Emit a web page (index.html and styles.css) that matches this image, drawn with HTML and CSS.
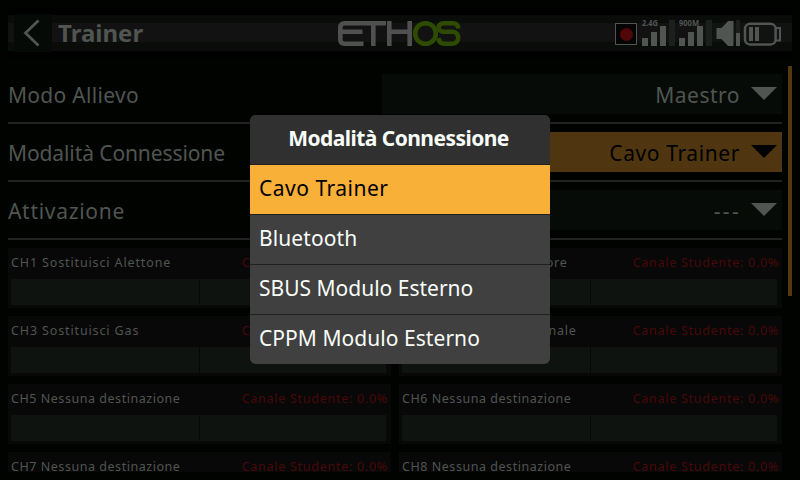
FILE: index.html
```html
<!DOCTYPE html>
<html lang="it">
<head>
<meta charset="utf-8">
<title>Trainer</title>
<link rel="stylesheet" href="styles.css">
</head>
<body>
<div class="screen">
  <header class="topbar">
    <div class="back"><svg width="38" height="38" viewBox="0 0 38 38"><path d="M25.500 6.500 12.500 19 25.500 31.500" fill="none" stroke="#505551" stroke-width="2.800"/></svg></div>
    <h1 class="title">Trainer</h1>
    <svg class="logo" width="124" height="28" viewBox="0 0 124 28" fill="none" stroke-width="4.600">
      <g stroke="#505050"><path d="M49 3.300H7.500Q3.300 3.300 3.300 7.500V19.500Q3.300 23.700 7.500 23.700H26.500M3.300 11.700H25.500M36.300 3.300V26M52.300 1V26M72.700 1V26M52.300 11.700H72.700"/></g>
      <g stroke="#2f4b00"><circle cx="88.500" cy="13.500" r="10.300"/><path d="M121.300 8.500Q121 3.300 115.500 3.300H106.500C100 3.300 100 11.700 106.500 11.700H115.500C123 11.700 123 23.700 115.500 23.700H107.500Q102 23.700 101.500 18"/></g>
    </svg>
    <svg class="status" width="170" height="38" viewBox="0 0 170 38">
      <rect x="3.500" y="9.500" width="21" height="21" fill="#050505" stroke="#505551"/>
      <circle cx="14.500" cy="20.500" r="6.500" fill="#500708"/>
      <g fill="#505551">
        <path d="M30 24h6v8h-6zM39 18h6v14h-6zM48 12h6v20h-6zM67 24h6v8h-6zM76 18h6v14h-6zM85 12h6v20h-6z"/>
        <path d="M104.500 14h5L116 7h5.500v25H116l-6.500-7h-5zM124 19h4v13h-4zM137 13h4v14h-4zM143 13h4v14h-4z"/>
      </g>
      <path d="M57 6h6v26h-6zM94 6h6v26h-6zM124 6h4v13h-4z" fill="#1c201d"/>
      <rect x="133" y="9.800" width="30.600" height="20.600" rx="5" fill="none" stroke="#505551" stroke-width="2.500"/>
      <path d="M164 14h4v12.500h-4" fill="none" stroke="#505551" stroke-width="2"/>
      <text class="band" x="30" y="12" textLength="16" lengthAdjust="spacingAndGlyphs">2.4G</text>
      <text class="band" x="67" y="12" textLength="20" lengthAdjust="spacingAndGlyphs">900M</text>
    </svg>
  </header>
  <main class="content">
    <section class="form">
      <div class="row"><span class="label modo">Modo Allievo</span><div class="select"><span class="maestro">Maestro</span><i class="arrow"></i></div></div>
      <div class="row"><span class="label conn">Modalità Connessione</span><div class="select focus"><span class="cavo">Cavo Trainer</span><i class="arrow"></i></div></div>
      <div class="row"><span class="label att">Attivazione</span><div class="select"><span class="dashes">---</span><i class="arrow"></i></div></div>
    </section>
    <section class="channels">
      <article class="card"><div class="info"><span>CH1 Sostituisci Alettone</span><b>Canale Studente: 0.0%</b></div><div class="bar"></div></article>
      <article class="card"><div class="info"><span>CH2 Sostituisci Elevatore</span><b>Canale Studente: 0.0%</b></div><div class="bar"></div></article>
      <article class="card"><div class="info"><span>CH3 Sostituisci Gas</span><b>Canale Studente: 0.0%</b></div><div class="bar"></div></article>
      <article class="card"><div class="info"><span class="rudder">CH4 Sostituisci Direzionale</span><b>Canale Studente: 0.0%</b></div><div class="bar"></div></article>
      <article class="card"><div class="info"><span class="none">CH5 Nessuna destinazione</span><b>Canale Studente: 0.0%</b></div><div class="bar"></div></article>
      <article class="card"><div class="info"><span class="none">CH6 Nessuna destinazione</span><b>Canale Studente: 0.0%</b></div><div class="bar"></div></article>
      <article class="card"><div class="info"><span class="none">CH7 Nessuna destinazione</span><b>Canale Studente: 0.0%</b></div><div class="bar"></div></article>
      <article class="card"><div class="info"><span class="none">CH8 Nessuna destinazione</span><b>Canale Studente: 0.0%</b></div><div class="bar"></div></article>
    </section>
  </main>
  <div class="scroll"></div>
  <div class="dialog" role="dialog">
    <h2>Modalità Connessione</h2>
    <ul>
      <li class="selected">Cavo Trainer</li>
      <li class="bluetooth">Bluetooth</li>
      <li class="sbus">SBUS Modulo Esterno</li>
      <li class="cppm">CPPM Modulo Esterno</li>
    </ul>
  </div>
</div>
</body>
</html>
```
FILE: styles.css
```css
* { box-sizing: border-box; }
body { margin: 0; background: #000300; font-family: "Noto Sans", sans-serif; }
.screen { position: relative; width: 800px; height: 480px; overflow: hidden; color: #505551; }
.topbar { display: flex; height: 50px; margin: 8px 8px 0; padding: 6px 6px 0; background: linear-gradient(#000 0 7px, #090c09 7px 15px, #111211 15px 34px, #090c09 34px 43px, #000100 43px); }
.back { width: 38px; height: 38px; background: #060a07; }
.back svg { display: block; margin-left: -1px; }
.title { margin: 0 0 0 6px; width: 279px; font-size: 24px; line-height: 38px; font-weight: 700; }
.logo { flex: none; margin-top: 6px; }
.status { margin-left: 151px; flex: none; }
.band { font-size: 9px; font-weight: 700; fill: #505551; }
.content { height: 406px; margin: 8px 18px 0 8px; overflow: hidden; }
.row { display: flex; align-items: center; justify-content: space-between; height: 58px; border-bottom: 2px solid #1f2420; font-size: 21px; line-height: 40px; letter-spacing: .9px; white-space: nowrap; }
.label, .select span { padding-top: 2px; }
.select { display: flex; align-items: center; justify-content: flex-end; width: 400px; height: 40px; padding-right: 5px; background: #070b08; }
.select span { margin-right: 11px; }
.modo { letter-spacing: .3px; }
.conn { letter-spacing: -.1px; }
.att { letter-spacing: .7px; }
.maestro { letter-spacing: .5px; }
.cavo { letter-spacing: .6px; }
.select .dashes { letter-spacing: 2.300px; margin-right: 10px; }
.arrow { width: 0; height: 0; margin-top: -1px; border-left: 13.500px solid transparent; border-right: 13.500px solid transparent; border-top: 13.500px solid #505551; }
.focus { background: #4f3611; color: #000; }
.focus .arrow { border-top-color: #000; }
.channels { display: grid; grid-template-columns: 383px 383px; gap: 8px; padding-top: 8px; }
.card { height: 60px; padding: 0 5px 0 3px; background: #080808; }
.info { display: flex; justify-content: space-between; height: 31px; font-size: 12.500px; line-height: 30px; letter-spacing: .87px; white-space: nowrap; }
.info .rudder { letter-spacing: .7px; }
.info .none { letter-spacing: .54px; }
.info b { font-weight: 400; color: #480809; letter-spacing: .73px; margin-right: -2px; }
.bar { height: 26px; background: linear-gradient(90deg, #0f1310 188px, #060806 188px 189px, #0f1310 189px); }
.scroll { position: absolute; left: 788px; top: 66px; width: 4px; height: 230px; background: #573910; }
.dialog { position: absolute; left: 250px; top: 115px; width: 300px; height: 249px; border-radius: 6px; overflow: hidden; background: #404040; color: #f8fcf8; }
.dialog h2 { margin: 0; height: 50px; padding-right: 3px; background: #303030; border-bottom: 1px solid #202020; text-align: center; font-size: 21px; line-height: 47px; font-weight: 700; letter-spacing: -.55px; }
.dialog ul { list-style: none; margin: 0; padding: 0; }
.dialog li { height: 50px; padding-left: 9px; border-bottom: 1px solid #202020; font-size: 21px; line-height: 47px; letter-spacing: .5px; }
.dialog li:last-child { border: 0; }
.dialog .selected { background: #f8b038; color: #000; }
.dialog .bluetooth { letter-spacing: .1px; }
.dialog .sbus { letter-spacing: 0; }
.dialog .cppm { letter-spacing: .05px; }
```
